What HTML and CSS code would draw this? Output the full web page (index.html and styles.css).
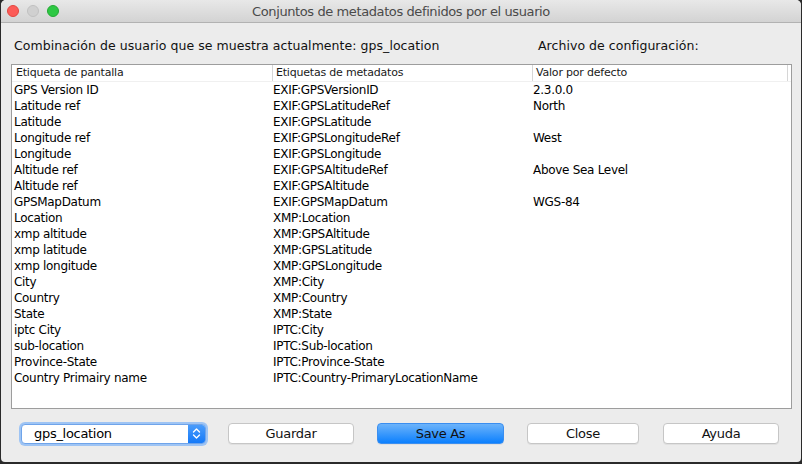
FILE: index.html
```html
<!DOCTYPE html>
<html>
<head>
<meta charset="utf-8">
<link rel="stylesheet" href="styles.css">
</head>
<body>
<div class="window">
  <div class="titlebar">
    <div class="lights">
      <span class="light red"></span>
      <span class="light gray"></span>
      <span class="light green"></span>
    </div>
    <div class="title">Conjuntos de metadatos definidos por el usuario</div>
    <div></div>
  </div>
  <div class="content">
    <div class="labels">
      <div>Combinación de usuario que se muestra actualmente: gps_location</div>
      <div>Archivo de configuración:</div>
    </div>
    <div class="table">
      <div class="thead">
        <div class="th first">Etiqueta de pantalla</div>
        <div class="th">Etiquetas de metadatos</div>
        <div class="th last">Valor por defecto</div>
      </div>
      <div class="tbody">
        <div class="row"><div>GPS Version ID</div><div>EXIF:GPSVersionID</div><div>2.3.0.0</div></div>
        <div class="row"><div>Latitude ref</div><div>EXIF:GPSLatitudeRef</div><div>North</div></div>
        <div class="row"><div>Latitude</div><div>EXIF:GPSLatitude</div><div></div></div>
        <div class="row"><div>Longitude ref</div><div>EXIF:GPSLongitudeRef</div><div>West</div></div>
        <div class="row"><div>Longitude</div><div>EXIF:GPSLongitude</div><div></div></div>
        <div class="row"><div>Altitude ref</div><div>EXIF:GPSAltitudeRef</div><div>Above Sea Level</div></div>
        <div class="row"><div>Altitude ref</div><div>EXIF:GPSAltitude</div><div></div></div>
        <div class="row"><div>GPSMapDatum</div><div>EXIF:GPSMapDatum</div><div>WGS-84</div></div>
        <div class="row"><div>Location</div><div>XMP:Location</div><div></div></div>
        <div class="row"><div>xmp altitude</div><div>XMP:GPSAltitude</div><div></div></div>
        <div class="row"><div>xmp latitude</div><div>XMP:GPSLatitude</div><div></div></div>
        <div class="row"><div>xmp longitude</div><div>XMP:GPSLongitude</div><div></div></div>
        <div class="row"><div>City</div><div>XMP:City</div><div></div></div>
        <div class="row"><div>Country</div><div>XMP:Country</div><div></div></div>
        <div class="row"><div>State</div><div>XMP:State</div><div></div></div>
        <div class="row"><div>iptc City</div><div>IPTC:City</div><div></div></div>
        <div class="row"><div>sub-location</div><div>IPTC:Sub-location</div><div></div></div>
        <div class="row"><div>Province-State</div><div>IPTC:Province-State</div><div></div></div>
        <div class="row"><div>Country Primairy name</div><div>IPTC:Country-PrimaryLocationName</div><div></div></div>
      </div>
    </div>
    <div class="buttons">
      <div class="select">
        <span class="select-text">gps_location</span>
        <span class="select-arrow">
          <svg width="9" height="13" viewBox="0 0 9 13"><path d="M1.5 5 L4.5 2 L7.5 5 M1.5 8 L4.5 11 L7.5 8" fill="none" stroke="#fff" stroke-width="1.4" stroke-linecap="round" stroke-linejoin="round"/></svg>
        </span>
      </div>
      <button class="btn b-guardar">Guardar</button>
      <button class="btn primary b-save">Save As</button>
      <button class="btn b-close">Close</button>
      <button class="btn b-ayuda">Ayuda</button>
    </div>
  </div>
</div>
</body>
</html>
```

FILE: styles.css
```css
html, body {
  margin: 0;
  padding: 0;
}
body {
  background: #2a2a2a;
  width: 802px;
  height: 464px;
  overflow: hidden;
  font-family: "DejaVu Sans", "Noto Sans", sans-serif;
  color: #000;
}
.window {
  margin-left: 1px;
  width: 800px;
  height: 462px;
  background: #ececec;
  border-radius: 5px 5px 4px 4px;
  overflow: hidden;
  display: flex;
  flex-direction: column;
}
.titlebar {
  height: 22px;
  flex: none;
  background: linear-gradient(#e8e8e8, #d3d3d3);
  border-bottom: 1px solid #b2b2b2;
  display: grid;
  grid-template-columns: 1fr auto 1fr;
  align-items: center;
}
.lights {
  display: flex;
  gap: 8px;
  padding-left: 6px;
}
.light {
  width: 12px;
  height: 12px;
  border-radius: 50%;
  box-sizing: border-box;
}
.red { background: #fc5b57; border: 1px solid #e2463f; }
.gray { background: #d0d0d0; border: 1px solid #c0c0c0; }
.green { background: #2ec844; border: 1px solid #25a934; }
.title {
  font-size: 13px;
  color: #4a4a4a;
  letter-spacing: -0.4px;
}
.content {
  flex: 1;
  display: flex;
  flex-direction: column;
}
.labels {
  display: grid;
  grid-template-columns: 524px 1fr;
  padding: 15px 0 0 13px;
  height: 16px;
  line-height: 16px;
  font-size: 12.5px;
  letter-spacing: 0.05px;
  color: #111;
}
.table {
  margin: 10px 0 0 10px;
  width: 781px;
  height: 345px;
  box-sizing: border-box;
  border: 1px solid #9d9d9d;
  background: #fff;
}
.thead {
  display: grid;
  grid-template-columns: 260px 260px 256px;
  height: 16px;
  line-height: 16px;
  font-size: 11px;
  letter-spacing: -0.2px;
  color: #1a1a1a;
  border-bottom: 1px solid #f0f0f0;
}
.th {
  padding-left: 3px;
  border-left: 1px solid #d6d6d6;
  white-space: nowrap;
}
.th.first {
  border-left: none;
  padding-left: 4px;
}
.th.last {
  border-right: 1px solid #d6d6d6;
}
.tbody {
  font-size: 12px;
  letter-spacing: -0.3px;
  color: #000;
}
.row {
  display: grid;
  grid-template-columns: 260px 260px 1fr;
  height: 16px;
  line-height: 16px;
}
.row > div {
  white-space: nowrap;
  padding-left: 2px;
}
.row > div:nth-child(2),
.row > div:nth-child(3) {
  padding-left: 1px;
}
.buttons {
  display: flex;
  align-items: center;
  padding: 14px 0 0 20px;
}
.select {
  width: 185px;
  height: 20px;
  box-sizing: border-box;
  display: flex;
  align-items: center;
  background: #fff;
  border: 1px solid #6fa4ea;
  border-radius: 4px;
  box-shadow: 0 0 0 2px #9ec4f4;
  overflow: hidden;
}
.select-text {
  flex: 1;
  padding-left: 12px;
  font-size: 13px;
  letter-spacing: -0.3px;
  line-height: 18px;
}
.select-arrow {
  width: 17px;
  height: 100%;
  display: flex;
  align-items: center;
  justify-content: center;
  background: linear-gradient(#4a9cfb, #1479f8);
}
.btn {
  height: 21px;
  box-sizing: border-box;
  margin: 0;
  padding: 0;
  font-family: inherit;
  font-size: 13px;
  letter-spacing: -0.3px;
  color: #111;
  background: #fff;
  border: 1px solid #c6c6c6;
  border-radius: 4px;
  box-shadow: 0 1px 0 rgba(0,0,0,0.05);
}
.primary {
  background: linear-gradient(#6cb3fa, #0c80fe);
  border-color: #3a8ef0;
  color: #111;
}
.b-guardar { width: 126px; margin-left: 22px; }
.b-save { width: 127px; margin-left: 23px; }
.b-close { width: 112px; margin-left: 23px; }
.b-ayuda { width: 116px; margin-left: 24px; }
```
